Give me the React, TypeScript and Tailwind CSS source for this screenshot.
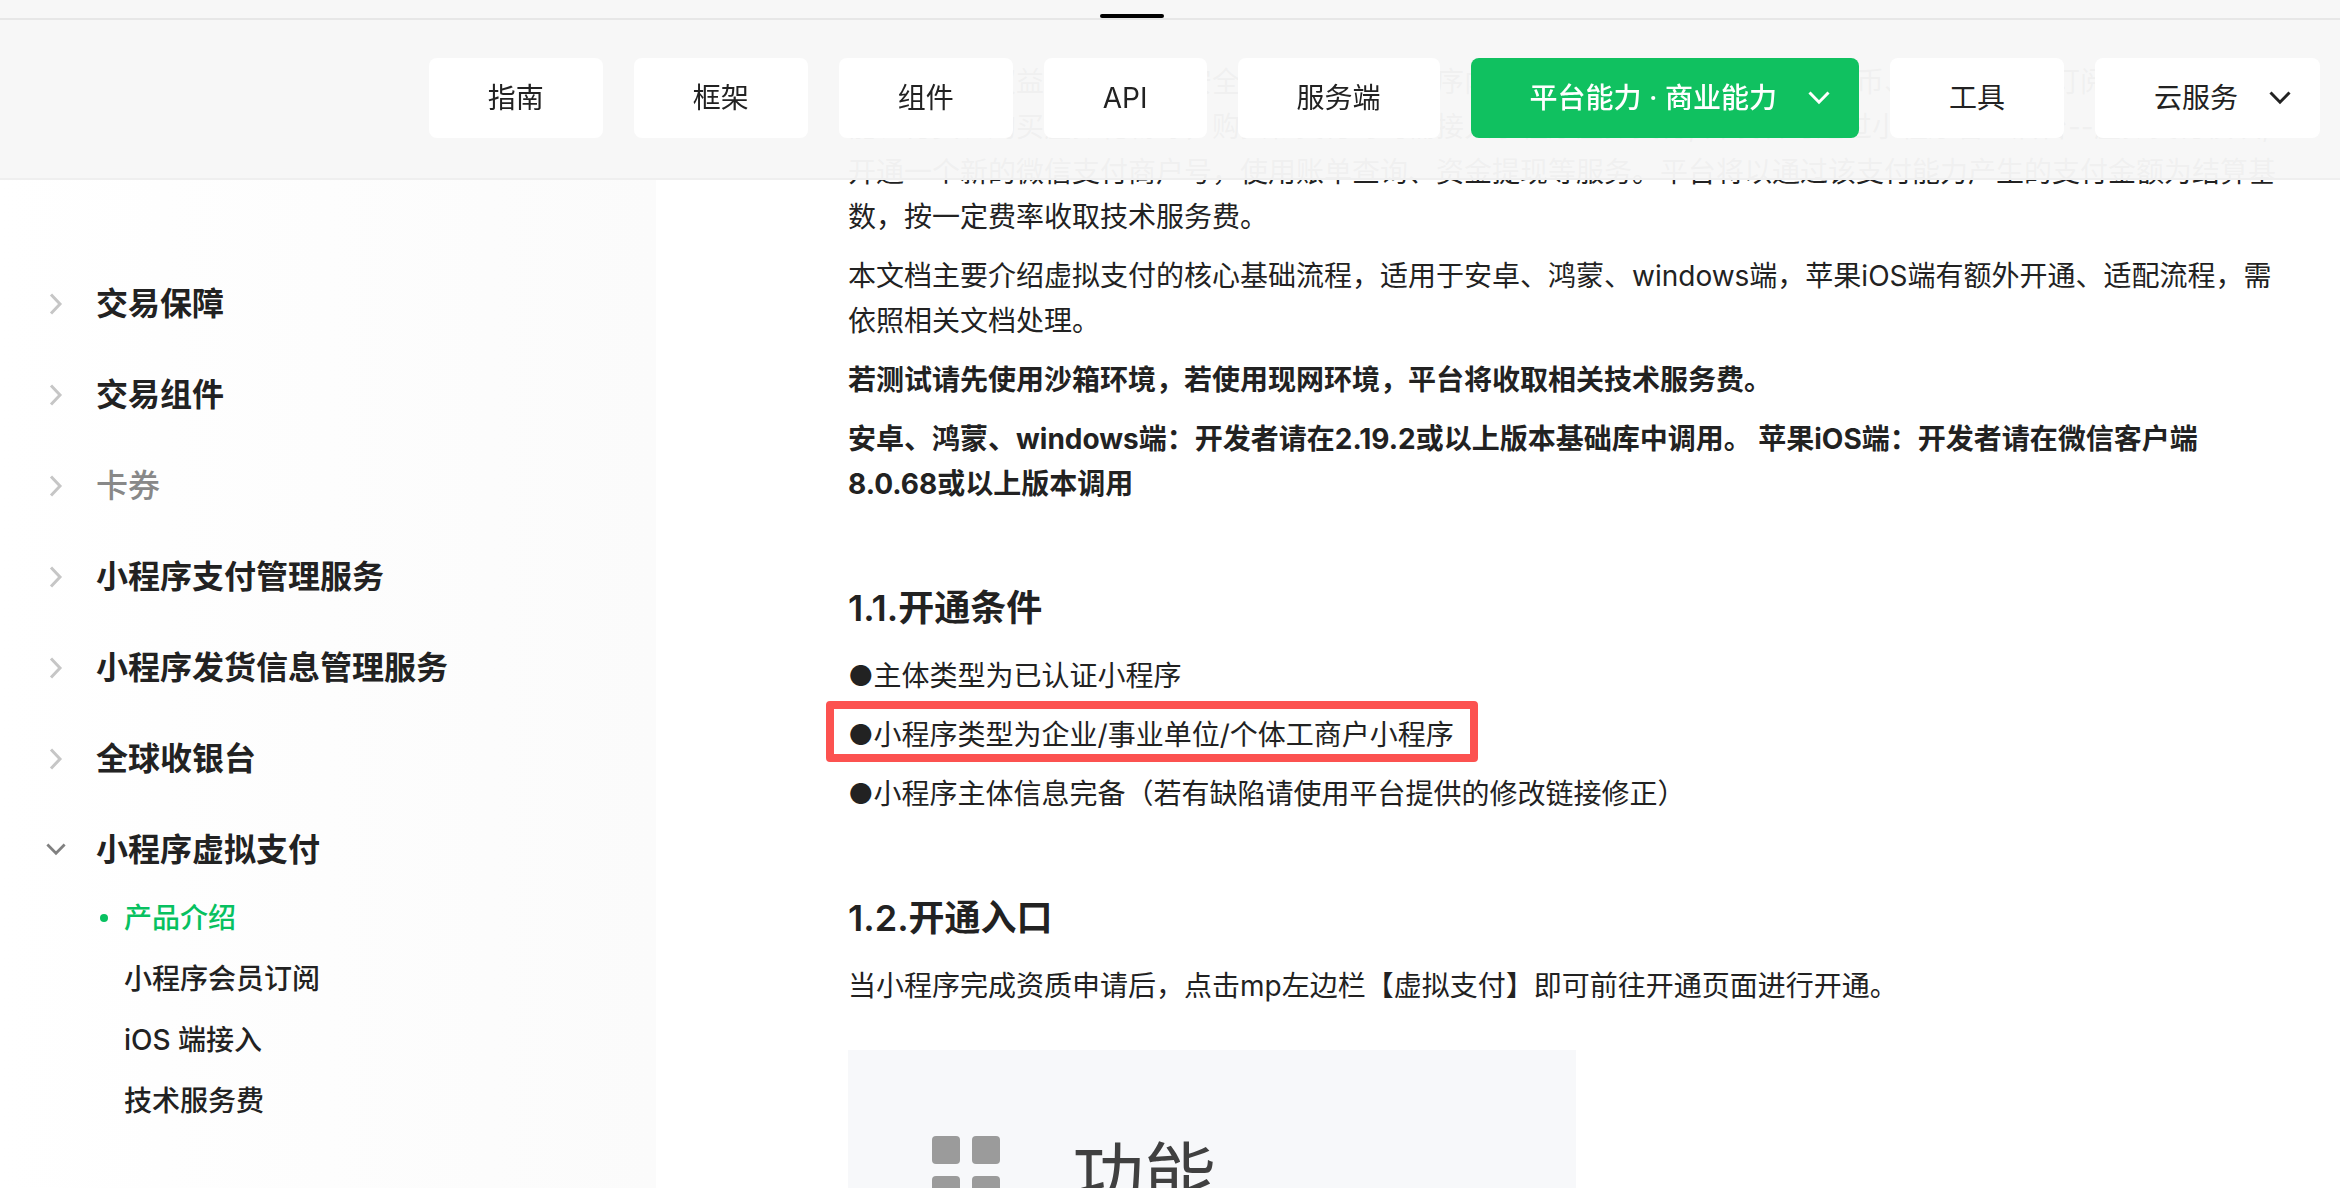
import React from 'react';
import { clsx } from 'clsx';

interface NavItem {
  label: string;
  active?: boolean;
  hasMenu?: boolean;
}

interface SideItem {
  label: string;
  muted?: boolean;
  children?: { label: string; active?: boolean }[];
}

const navItems: NavItem[] = [
  { label: '指南' },
  { label: '框架' },
  { label: '组件' },
  { label: 'API' },
  { label: '服务端' },
  { label: '平台能力 · 商业能力', active: true, hasMenu: true },
  { label: '工具' },
  { label: '云服务', hasMenu: true },
];

const sideItems: SideItem[] = [
  { label: '交易保障' },
  { label: '交易组件' },
  { label: '卡券', muted: true },
  { label: '小程序支付管理服务' },
  { label: '小程序发货信息管理服务' },
  { label: '全球收银台' },
  {
    label: '小程序虚拟支付',
    children: [
      { label: '产品介绍', active: true },
      { label: '小程序会员订阅' },
      { label: 'iOS 端接入' },
      { label: '技术服务费' },
    ],
  },
];

const ChevronDown: React.FC<{ className?: string }> = ({ className }) => (
  <svg viewBox="0 0 22 14" fill="none" stroke="currentColor" strokeWidth="3" className={className} aria-hidden="true">
    <path d="M1.5 1.5 11 11.2 20.5 1.5" />
  </svg>
);

const ChevronRight: React.FC = () => (
  <svg viewBox="0 0 14 22" fill="none" stroke="currentColor" strokeWidth="3" className="h-[22px] w-[14px] text-[#c6c6c6]" aria-hidden="true">
    <path d="M2 1.5 11 11 2 20.5" />
  </svg>
);

const Header: React.FC = () => (
  <header className="fixed inset-x-0 top-0 z-10 border-b-2 border-[#efefef] bg-[#f7f7f7]/97">
    <div className="flex h-5 items-end border-b-2 border-[#e7e7e7]">
      {/* current top-level tab */}
      <div className="ml-[47%] h-1 w-16 rounded-xs bg-black" />
    </div>
    <nav className="flex justify-end gap-[31px] pt-[38px] pr-5 pb-10">
      {navItems.map(item => (
        <button
          key={item.label}
          className={clsx(
            'flex h-20 shrink-0 items-center rounded-lg text-[28px]',
            item.hasMenu ? 'gap-[31px] pr-[29px] pl-[59px]' : 'px-[59px]',
            item.active ? 'bg-[#10c160] font-medium text-white' : 'bg-white'
          )}
        >
          {item.label}
          {item.hasMenu && <ChevronDown className="h-[14px] w-[22px]" />}
        </button>
      ))}
    </nav>
  </header>
);

const Sidebar: React.FC = () => (
  <aside className="w-[656px] shrink-0 bg-linear-to-r from-white to-[#fbfbfb] pt-[258px]">
    <ul>
      {sideItems.map(item => (
        <li key={item.label}>
          <a
            href="#"
            className={clsx(
              'flex h-[91px] items-center gap-[30px] pl-[46px] text-[32px]',
              item.muted ? 'font-medium text-[#888888]' : 'font-semibold'
            )}
          >
            <span className="flex w-5 justify-center">
              {item.children ? <ChevronDown className="h-[13px] w-5 text-[#808080]" /> : <ChevronRight />}
            </span>
            {item.label}
          </a>
          {item.children && (
            <ul className="-mt-2">
              {item.children.map(child => (
                <li key={child.label}>
                  <a
                    href="#"
                    className={clsx(
                      'flex h-[61px] items-center gap-4 pl-[100px] text-[28px] font-medium',
                      child.active && 'text-[#07c160]'
                    )}
                  >
                    <span className={clsx('h-2 w-2 rounded-full', child.active && 'bg-[#07c160]')} />
                    {child.label}
                  </a>
                </li>
              ))}
            </ul>
          )}
        </li>
      ))}
    </ul>
  </aside>
);

const Article: React.FC = () => (
  <main className="min-w-0 flex-1 pt-[60px] pr-[58px] pl-48 text-[28px] leading-[45px]">
    <p className="mb-[14px]">
      等各类会员权益、内容等的安全合规售卖，小程序内提供的虚拟服务，包括充值代币、道具、会员订阅等虚拟支付功能、付费、购买虚拟礼物等，购买和支付时均需接入小程序虚拟支付, 开发者可通过小程序管理后台--虚拟支付模块,
      开通一个新的微信支付商户号，使用账单查询、资金提现等服务。平台将以通过该支付能力产生的支付金额为结算基数，按一定费率收取技术服务费。
    </p>
    <p className="mb-[14px]">
      本文档主要介绍虚拟支付的核心基础流程，适用于安卓、鸿蒙、windows端，苹果iOS端有额外开通、适配流程，需依照相关文档处理。
    </p>
    <p className="mb-[14px] font-bold">若测试请先使用沙箱环境，若使用现网环境，平台将收取相关技术服务费。</p>
    <p className="font-bold">
      安卓、鸿蒙、windows端：开发者请在2.19.2或以上版本基础库中调用。 苹果iOS端：开发者请在微信客户端8.0.68或以上版本调用
    </p>

    <h2 className="mt-[74px] mb-[19px] text-[36px] leading-[54px] font-semibold">1.1.开通条件</h2>
    <p className="mb-[14px]">●主体类型为已认证小程序</p>
    <p className="mb-[14px]">
      <span className="relative inline-block align-top">
        ●小程序类型为企业/事业单位/个体工商户小程序
        {/* highlight frame */}
        <span className="absolute -top-3 -right-6 -bottom-1 -left-[22px] rounded-sm border-8 border-[#fc5250]" />
      </span>
    </p>
    <p>●小程序主体信息完备（若有缺陷请使用平台提供的修改链接修正）</p>

    <h2 className="mt-[74px] mb-[19px] text-[36px] leading-[54px] font-semibold">1.2.开通入口</h2>
    <p>当小程序完成资质申请后，点击mp左边栏【虚拟支付】即可前往开通页面进行开通。</p>

    {/* admin console menu preview */}
    <div className="mt-[41px] flex h-[400px] w-[728px] items-start gap-[72px] bg-[#f7f8fa] pt-[86px] pl-21">
      <div className="grid grid-cols-2 gap-3">
        {[0, 1, 2, 3].map(i => (
          <span key={i} className="h-7 w-7 rounded-sm bg-[#9b9b9b]" />
        ))}
      </div>
      <span className="text-[72px] leading-[80px] text-[#404040]">功能</span>
    </div>
  </main>
);

export default function App() {
  return (
    <div
      lang="zh-CN"
      className="flex h-screen overflow-hidden bg-white font-['Inter','Noto_Sans_CJK_SC',sans-serif] text-[#222222]"
    >
      <Header />
      <Sidebar />
      <Article />
    </div>
  );
}
